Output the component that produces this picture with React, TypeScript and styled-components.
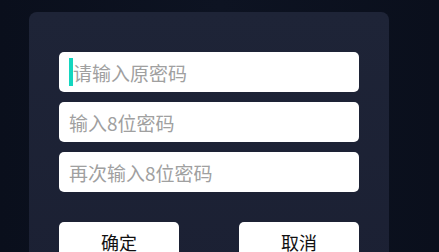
import React from 'react';
import styled, { createGlobalStyle } from 'styled-components';

const GlobalStyle = createGlobalStyle`
  html, body {
    margin: 0;
    padding: 0;
    height: 100%;
    overflow: hidden;
  }
  body {
    background: linear-gradient(90deg, #0a0f1c 0%, #0d1322 50%, #0a0f1c 100%);
    font-family: "Noto Sans CJK SC", "Noto Sans", sans-serif;
  }
`;

const Page = styled.div`
  padding: 12px 0 0 29px;
`;

const Card = styled.div`
  width: 360px;
  box-sizing: border-box;
  padding: 40px 30px 30px;
  background: linear-gradient(180deg, #1e2437 0%, #1b2033 100%);
  border-radius: 8px;
  display: flex;
  flex-direction: column;
`;

const Fields = styled.div`
  display: flex;
  flex-direction: column;
  gap: 10px;
`;

const Field = styled.label`
  display: flex;
  align-items: center;
  height: 40px;
  padding-left: 10px;
  background: #ffffff;
  border-radius: 5px;
  box-sizing: border-box;
`;

const Caret = styled.span`
  width: 4px;
  height: 28px;
  background: #14d6bf;
  flex-shrink: 0;
`;

const Input = styled.input`
  flex: 1;
  min-width: 0;
  height: 100%;
  border: none;
  outline: none;
  background: transparent;
  padding: 0;
  font-family: inherit;
  font-size: 19px;
  color: #333;
  &::placeholder {
    color: #a0a0a0;
  }
`;

const Actions = styled.div`
  display: flex;
  justify-content: space-between;
  margin-top: 30px;
`;

const Button = styled.button`
  width: 120px;
  height: 40px;
  border: none;
  border-radius: 5px;
  background: #ffffff;
  color: #111;
  font-family: inherit;
  font-size: 18px;
  padding: 0;
  cursor: pointer;
`;

const App = () => (
  <>
    <GlobalStyle />
    <Page>
      <Card>
        <Fields>
          <Field>
            <Caret />
            <Input type="password" placeholder="请输入原密码" />
          </Field>
          <Field>
            <Input type="password" placeholder="输入8位密码" />
          </Field>
          <Field>
            <Input type="password" placeholder="再次输入8位密码" />
          </Field>
        </Fields>
        <Actions>
          <Button>确定</Button>
          <Button>取消</Button>
        </Actions>
      </Card>
    </Page>
  </>
);

export default App;
